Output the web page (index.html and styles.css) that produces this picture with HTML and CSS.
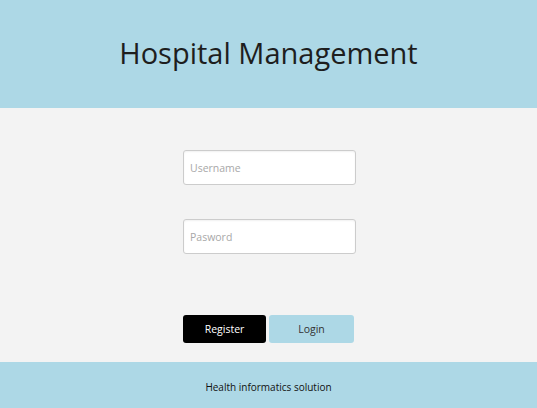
FILE: index.html
```html
<!DOCTYPE html>
<html>
<head>
<meta charset="utf-8">
<link rel="stylesheet" href="styles.css">
</head>
<body>
<header class="header"><h1 class="title">Hospital Management</h1></header>
<main class="main">
  <form class="form">
    <input class="field" type="text" placeholder="Username">
    <input class="field" type="password" placeholder="Pasword">
    <div class="actions">
      <button type="button" class="btn btn-register">Register</button>
      <button type="button" class="btn btn-login">Login</button>
    </div>
  </form>
</main>
<footer class="footer">Health informatics solution</footer>
</body>
</html>
```
FILE: styles.css
```css
* { box-sizing: border-box; }
html, body { margin: 0; padding: 0; }
body {
  width: 537px;
  height: 408px;
  display: flex;
  flex-direction: column;
  font-family: "Open Sans", "Noto Sans", sans-serif;
  background: #f3f3f3;
  color: #1a1a1a;
}
.header {
  height: 108px;
  background: #add8e6;
  display: flex;
  align-items: center;
  justify-content: center;
}
.title {
  margin: 0;
  font-weight: 400;
  font-size: 29px;
  color: #1e1e1e;
  padding-bottom: 3px;
}
.main {
  height: 254px;
  display: flex;
  justify-content: center;
  padding-left: 2px;
}
.form {
  width: 173px;
  padding-top: 42px;
  display: flex;
  flex-direction: column;
}
.field {
  width: 173px;
  height: 35px;
  margin: 0 0 34px 0;
  border: 1px solid #cccccc;
  border-radius: 3px;
  background: #fff;
  box-shadow: inset 0 1px 2px rgba(0,0,0,0.06);
  padding: 0 6px;
  font-family: inherit;
  font-size: 10.5px;
  outline: none;
}
.field::placeholder { color: #a8a8a8; }
.actions {
  margin-top: 27px;
  display: flex;
  gap: 3px;
}
.btn {
  height: 28px;
  border: none;
  border-radius: 3px;
  font-family: inherit;
  font-size: 10.5px;
  padding: 0;
}
.btn-register {
  width: 83px;
  background: #000;
  color: #fff;
}
.btn-login {
  width: 85px;
  background: #add8e6;
  color: #333;
}
.footer {
  height: 46px;
  padding-top: 3px;
  background: #add8e6;
  display: flex;
  align-items: center;
  justify-content: center;
  font-size: 10px;
  color: #111;
}
```
